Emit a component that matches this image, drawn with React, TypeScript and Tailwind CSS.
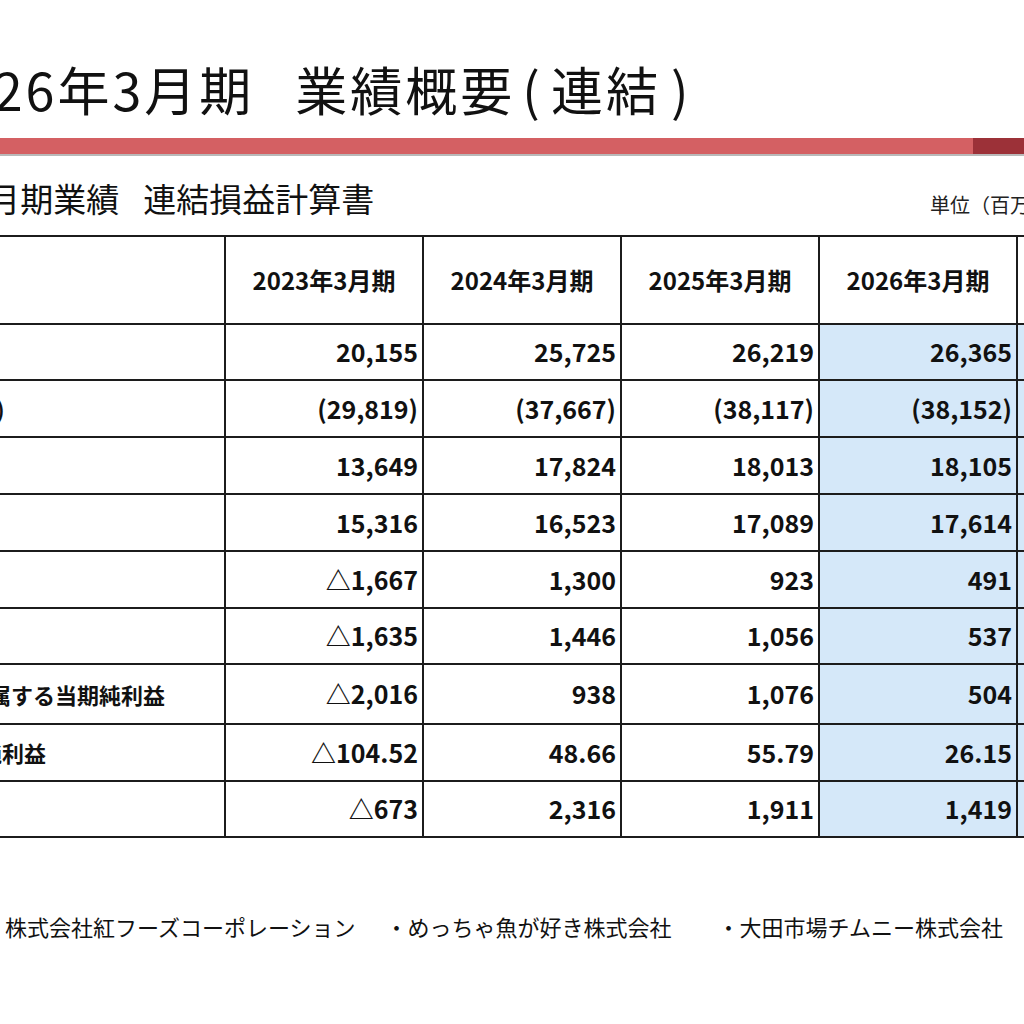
import React from "react";

const rows = [
  { label: "売上高", v: ["20,155", "25,725", "26,219", "26,365"] },
  { label: "(チェーン売上高)", v: ["(29,819)", "(37,667)", "(38,117)", "(38,152)"] },
  { label: "売上総利益", v: ["13,649", "17,824", "18,013", "18,105"] },
  { label: "販管費", v: ["15,316", "16,523", "17,089", "17,614"] },
  { label: "営業利益", v: ["△1,667", "1,300", "923", "491"] },
  { label: "経常利益", v: ["△1,635", "1,446", "1,056", "537"] },
  { label: "親会社株主に帰属する当期純利益", v: ["△2,016", "938", "1,076", "504"] },
  { label: "1株当たり当期純利益", v: ["△104.52", "48.66", "55.79", "26.15"] },
  { label: "EBITDA", v: ["△673", "2,316", "1,911", "1,419"] },
];

const years = ["2023年3月期", "2024年3月期", "2025年3月期", "2026年3月期"];

const App: React.FC = () => {
  return (
    <div className="w-[1024px] h-[1024px] overflow-hidden bg-white text-[#111] font-['Noto_Sans_CJK_JP',sans-serif]">
      {/* title */}
      <h1 className="mt-[63px] flex text-[52px] leading-none font-normal tracking-[3px] whitespace-nowrap">
        <span className="ml-[-70px]">2026年3月期</span>
        <span className="ml-[41px]">業績概要</span>
        <span className="ml-[7px] mr-[8px]">(</span>
        <span>連結</span>
        <span className="ml-[10px]">)</span>
      </h1>

      {/* red rule */}
      <div className="mt-[23px] flex h-[16px]">
        <div className="w-[973px] bg-[#d46063]" />
        <div className="flex-1 bg-[#9c3138]" />
      </div>
      <div className="h-[2px] bg-[#b9b9b9]" />

      {/* subtitle + unit */}
      <div className="mt-[26px] grid grid-cols-[930px_200px] items-end">
        <h2 className="flex text-[33px] leading-none font-normal whitespace-nowrap">
          <span className="ml-[-31px]">3月期業績</span>
          <span className="ml-[24px]">連結損益計算書</span>
        </h2>
        <span className="text-[20px] leading-none whitespace-nowrap text-[#222]">単位（百万円）</span>
      </div>

      {/* table */}
      <div className="mt-[20px] ml-[-176px] grid w-[1390px] grid-cols-[400px_196px_196px_196px_196px_196px] grid-rows-[86px_54px_55px_55px_55px_55px_54px_58px_55px_54px] gap-[2px] bg-[#1c1c1c] py-[2px] font-bold">
        <div className="bg-white" />
        {years.map((y) => (
          <div key={y} className="flex items-center justify-center bg-white text-[24px]">
            {y}
          </div>
        ))}
        <div className="bg-white" />

        {rows.map((r) => (
          <React.Fragment key={r.label}>
            <div className="flex items-center whitespace-nowrap bg-white pl-[11px] text-[22px]">{r.label}</div>
            {r.v.map((n, i) => (
              <div
                key={i}
                className={`flex items-center justify-end pr-[4px] text-[25px] ${i === 3 ? "bg-[#d5e8f9]" : "bg-white"}`}
              >
                {n}
              </div>
            ))}
            <div className="bg-[#d5e8f9]" />
          </React.Fragment>
        ))}
      </div>

      {/* group companies */}
      <div className="mt-[77px] ml-[-17px] flex text-[22px] leading-none whitespace-nowrap">
        <span>・株式会社紅フーズコーポレーション</span>
        <span className="ml-[30px]">・めっちゃ魚が好き株式会社</span>
        <span className="ml-[46px]">・大田市場チムニー株式会社</span>
      </div>
    </div>
  );
};

export default App;
